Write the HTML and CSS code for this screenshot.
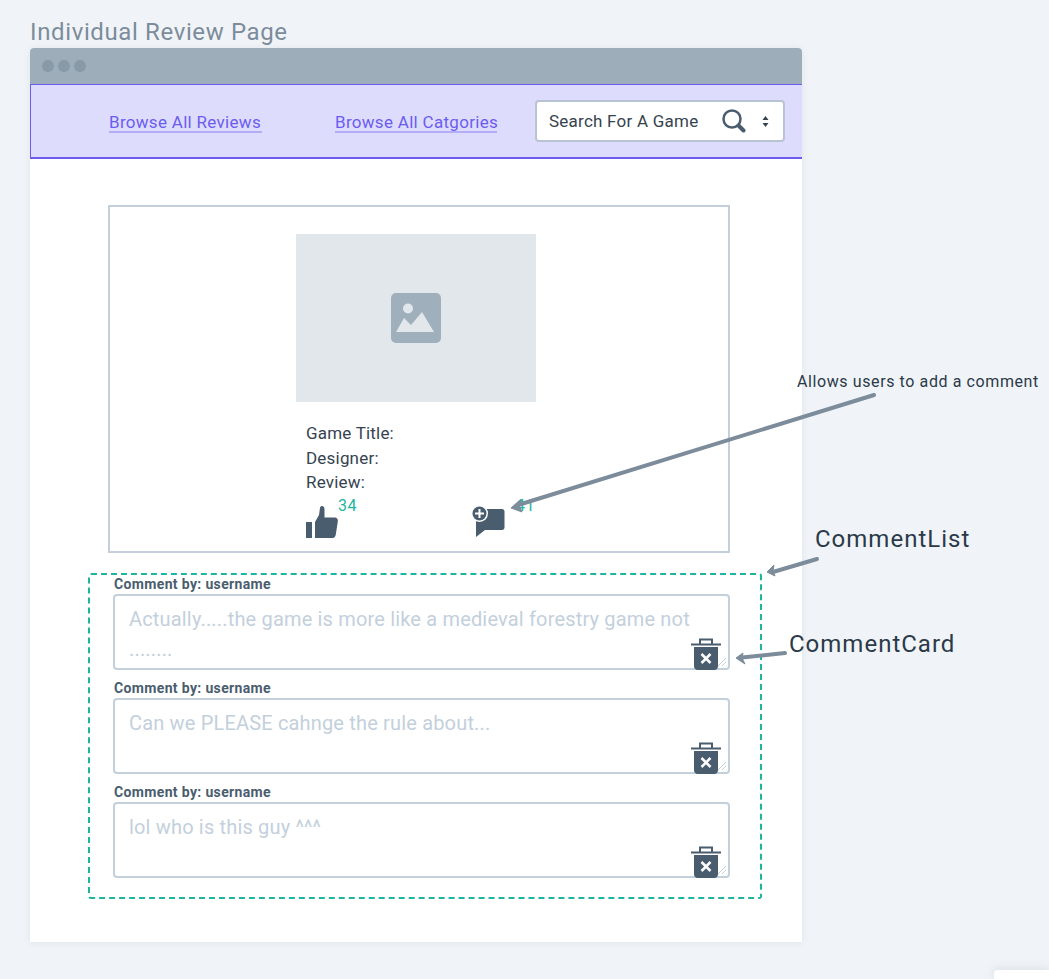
FILE: index.html
```html
<!DOCTYPE html>
<html lang="en">
<head>
<meta charset="utf-8">
<title>Individual Review Page</title>
<link rel="stylesheet" href="styles.css">
</head>
<body>

<h1 class="page-title">Individual Review Page</h1>

<div class="window">
  <div class="titlebar">
    <span class="dot"></span><span class="dot"></span><span class="dot"></span>
  </div>

  <div class="nav">
    <a class="nav-link first">Browse All Reviews</a>
    <a class="nav-link second">Browse All Catgories</a>
    <div class="search">
      <span class="search-text">Search For A Game</span>
      <svg class="search-icon" width="24" height="24" viewBox="0 0 24 24">
        <circle cx="10" cy="10" r="8.500" fill="none" stroke="#4a5d6e" stroke-width="2.500"></circle>
        <path d="M16.500 16.500l5 5" stroke="#4a5d6e" stroke-width="4" stroke-linecap="round"></path>
      </svg>
      <svg class="search-arrows" width="7" height="11" viewBox="0 0 7 11">
        <path d="M3.500 0L6.500 4H.5zM3.500 11L.5 7h6z" fill="#36434f"></path>
      </svg>
    </div>
  </div>

  <div class="content">
    <div class="review">
      <div class="picture">
        <svg width="50" height="50" viewBox="0 0 50 50">
          <rect width="50" height="50" rx="5" fill="#a0afbc"></rect>
          <circle cx="17" cy="15.500" r="5" fill="#e2e7ec"></circle>
          <path d="M5 39l8-14 7 7 11-13 12 20z" fill="#e2e7ec"></path>
        </svg>
      </div>
      <div class="details">
        <div>Game Title:</div>
        <div>Designer:</div>
        <div>Review:</div>
      </div>
      <div class="actions">
        <div class="action likes">
          <svg width="33" height="33" viewBox="0 0 33 33">
            <path d="M0 17h6v16H0z" fill="#4a5d6e"></path>
            <path d="M9 17l4-7 1-7c.3-1.500 1-2 2-2s2.500 1 2.500 3v8.500H29c2 0 3.200 2 2.800 4l-2 13c-.5 2-1.500 3.500-3 3.500H9z" fill="#4a5d6e"></path>
          </svg>
          <span class="count">34</span>
        </div>
        <div class="action comments">
          <svg width="33" height="32" viewBox="0 0 33 32">
            <path d="M4 3h26c1.500 0 2.500 1 2.500 2.500v16c0 1.500-1 2.500-2.500 2.500H13l-9 7z" fill="#4a5d6e"></path>
            <circle cx="7.500" cy="7.500" r="8.500" fill="#fff"></circle>
            <circle cx="7.500" cy="7.500" r="7" fill="#4a5d6e"></circle>
            <path d="M7.500 3v9M3 7.500h9" stroke="#fff" stroke-width="2"></path>
          </svg>
          <span class="count">41</span>
        </div>
      </div>
    </div>

    <div class="comment-list">
      <div class="comment">
        <div class="comment-by">Comment by: username</div>
        <div class="comment-box">
          <div class="comment-text">Actually.....the game is more like a medieval forestry game not ........</div>
          <svg class="trash" width="30" height="32" viewBox="0 0 30 32">
            <path d="M0 6.500h30M9 6V1.500h12V6" fill="none" stroke="#4a5d6e" stroke-width="2"></path>
            <path d="M3 9h24v19c0 2-1 4-4 4H7c-3 0-4-2-4-4z" fill="#4a5d6e"></path>
            <path d="M10.500 16l9 9M19.500 16l-9 9" stroke="#fff" stroke-width="2.500"></path>
          </svg>
          <svg class="grip" width="10" height="10" viewBox="0 0 10 10">
            <path d="M1 9l8-8M5 9l4-4" stroke="#c3d0dc" stroke-width="1"></path>
          </svg>
        </div>
      </div>
      <div class="comment">
        <div class="comment-by">Comment by: username</div>
        <div class="comment-box">
          <div class="comment-text">Can we PLEASE cahnge the rule about...</div>
          <svg class="trash" width="30" height="32" viewBox="0 0 30 32">
            <path d="M0 6.500h30M9 6V1.500h12V6" fill="none" stroke="#4a5d6e" stroke-width="2"></path>
            <path d="M3 9h24v19c0 2-1 4-4 4H7c-3 0-4-2-4-4z" fill="#4a5d6e"></path>
            <path d="M10.500 16l9 9M19.500 16l-9 9" stroke="#fff" stroke-width="2.500"></path>
          </svg>
          <svg class="grip" width="10" height="10" viewBox="0 0 10 10">
            <path d="M1 9l8-8M5 9l4-4" stroke="#c3d0dc" stroke-width="1"></path>
          </svg>
        </div>
      </div>
      <div class="comment">
        <div class="comment-by">Comment by: username</div>
        <div class="comment-box">
          <div class="comment-text">lol who is this guy ^^^</div>
          <svg class="trash" width="30" height="32" viewBox="0 0 30 32">
            <path d="M0 6.500h30M9 6V1.500h12V6" fill="none" stroke="#4a5d6e" stroke-width="2"></path>
            <path d="M3 9h24v19c0 2-1 4-4 4H7c-3 0-4-2-4-4z" fill="#4a5d6e"></path>
            <path d="M10.500 16l9 9M19.500 16l-9 9" stroke="#fff" stroke-width="2.500"></path>
          </svg>
          <svg class="grip" width="10" height="10" viewBox="0 0 10 10">
            <path d="M1 9l8-8M5 9l4-4" stroke="#c3d0dc" stroke-width="1"></path>
          </svg>
        </div>
      </div>
    </div>
  </div>
</div>

<!-- annotations sit on top of the wireframe -->
<svg class="arrows" width="1049" height="979" viewBox="0 0 1049 979">
  <g fill="#7c8c9b" stroke="#7c8c9b" stroke-linejoin="round">
    <path d="M874 395L518 505" fill="none" stroke-width="4" stroke-linecap="round"></path>
    <path d="M511 508l10-9-2 6 3 7z" stroke-width="1"></path>
    <path d="M817 559l-44 13" fill="none" stroke-width="4" stroke-linecap="round"></path>
    <path d="M767 572l7-7-1 6 2 5z" stroke-width="1"></path>
    <path d="M785 653l-43 4.500" fill="none" stroke-width="4" stroke-linecap="round"></path>
    <path d="M736 658l7-5-1 5 3 6z" stroke-width="1"></path>
  </g>
</svg>
<div class="note note-add">Allows users to add a comment</div>
<div class="note note-big note-list">CommentList</div>
<div class="note note-big note-card">CommentCard</div>
<div class="corner-widget"></div>

</body>
</html>
```

FILE: styles.css
```css
html, body {
  margin: 0;
  height: 979px;
  overflow: hidden;
}
body {
  position: relative;
  background-color: #f0f4f8;
  font-family: "Roboto", "Liberation Sans", sans-serif;
  color: #36434f;
}
.page-title {
  margin: 0;
  padding: 17px 0 0 30px;
  height: 31px;
  font-size: 24px;
  line-height: 31px;
  font-weight: 400;
  color: #7c8c9b;
  letter-spacing: 0.62px;
}
.window {
  margin-left: 30px;
  width: 772px;
  height: 894px;
  background-color: #ffffff;
  border-radius: 4px 4px 0 0;
  box-shadow: 0 1px 6px rgba(120, 140, 160, 0.15);
}
.titlebar {
  display: flex;
  align-items: center;
  gap: 4px;
  height: 36px;
  padding-left: 12px;
  box-sizing: border-box;
  background-color: #9dadb9;
  border-radius: 4px 4px 0 0;
}
.dot {
  width: 12px;
  height: 12px;
  border-radius: 50%;
  background-color: #8899a8;
}
.nav {
  display: flex;
  align-items: center;
  height: 75px;
  box-sizing: border-box;
  border-top: 1px solid #6b5cf0;
  border-bottom: 2px solid #6b5cf0;
  border-left: 1px solid #6b5cf0;
  background-color: #dedcfd;
}
.nav-link {
  padding-top: 4px;
  font-size: 17px;
  line-height: 18px;
  letter-spacing: 0.3px;
  color: #6b5cf0;
  border-bottom: 2px solid #b3adf7;
  white-space: nowrap;
}
.first {
  margin-left: 78px;
  width: 153px;
}
.second {
  margin-left: 73px;
  width: 162px;
}
.search {
  display: flex;
  align-items: center;
  margin-left: 38px;
  width: 250px;
  height: 42px;
  box-sizing: border-box;
  padding-left: 12px;
  background-color: #ffffff;
  border: 2px solid #b8c4d4;
  border-radius: 4px;
}
.search-text {
  width: 173px;
  font-size: 17px;
  letter-spacing: 0.24px;
}
.search-arrows {
  margin-left: 16px;
}
.content {
  padding: 46px 0 0 58px;
}
.review {
  position: relative;
  width: 622px;
  height: 348px;
  margin-left: 20px;
  box-sizing: border-box;
  border: 2px solid #c3d0dc;
  padding: 27px 0 0 186px;
}
.picture {
  display: flex;
  align-items: center;
  justify-content: center;
  width: 240px;
  height: 168px;
  background-color: #e2e7ec;
}
.details {
  padding: 19px 0 0 10px;
  font-size: 17px;
  line-height: 24.500px;
  letter-spacing: 0.2px;
}
.actions {
  display: flex;
  padding: 2px 0 0 10px;
}
.action {
  display: flex;
  align-items: flex-start;
  height: 40px;
}
.likes svg {
  margin-top: 8.500px;
}
.comments svg {
  margin-top: 9.500px;
}
.likes {
  width: 166px;
}
.count {
  margin-top: -1px;
  font-size: 16px;
  line-height: 20px;
  letter-spacing: 0.4px;
  color: #1db5a0;
}
.likes .count {
  margin-left: -1px;
}
.comments .count {
  margin-left: 11px;
}
.comment-list {
  width: 674px;
  height: 326px;
  box-sizing: border-box;
  margin-top: 20px;
  padding: 1px 0 0 23px;
  border: 2px dashed #1db5a0;
  border-radius: 3px;
}
.comment {
  margin-bottom: 10px;
}
.comment-by {
  height: 18px;
  padding-left: 1px;
  font-size: 14px;
  line-height: 16px;
  letter-spacing: 0.35px;
  font-weight: 700;
  color: #4a5d6e;
}
.comment-box {
  position: relative;
  width: 617px;
  height: 76px;
  box-sizing: border-box;
  padding: 8px 14px 0 14px;
  border: 2px solid #c3d0dc;
  border-radius: 4px;
}
.comment-text {
  font-size: 20px;
  line-height: 30px;
  letter-spacing: 0.17px;
  color: #c3d0dc;
}
.trash {
  position: absolute;
  right: 7px;
  bottom: -2px;
}
.grip {
  position: absolute;
  right: 1px;
  bottom: 1px;
}
.arrows {
  position: absolute;
  left: 0;
  top: 0;
  pointer-events: none;
}
.note {
  position: absolute;
  font-size: 16px;
  line-height: 20px;
  letter-spacing: 0.6px;
  color: #2b3a48;
  white-space: nowrap;
}
.note-big {
  font-size: 24px;
  line-height: 30px;
  letter-spacing: 1px;
}
.note-add {
  left: 797px;
  top: 372px;
}
.note-list {
  left: 815px;
  top: 524px;
}
.note-card {
  left: 789px;
  top: 629px;
}
.corner-widget {
  position: absolute;
  left: 994px;
  top: 970px;
  width: 55px;
  height: 9px;
  background-color: #ffffff;
  border-radius: 4px 0 0 0;
  box-shadow: 0 0 10px rgba(120, 140, 160, 0.25);
}
```
